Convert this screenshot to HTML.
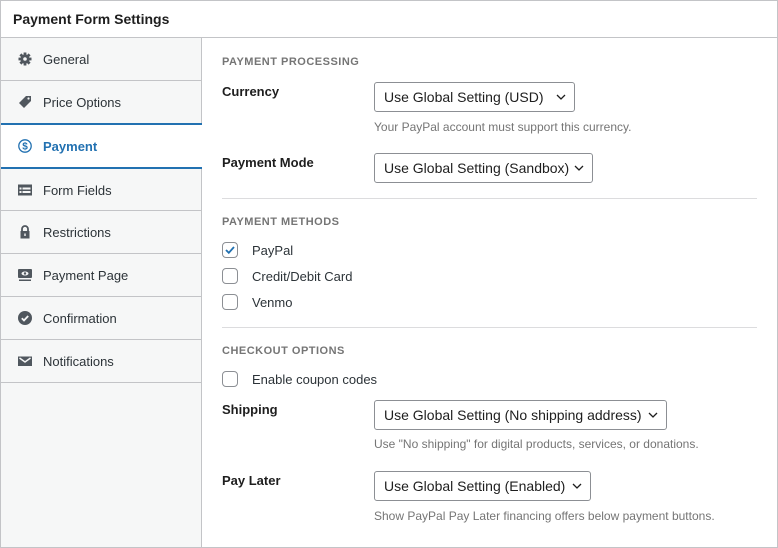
<!DOCTYPE html>
<html><head><style>
*{margin:0;padding:0;box-sizing:border-box}
body{width:778px;height:548px;background:#fff;font-family:"Liberation Sans","DejaVu Sans",sans-serif;color:#1e1e1e;position:relative;overflow:hidden}
.a{position:absolute;white-space:nowrap}
#box{position:absolute;left:0;top:0;width:778px;height:548px;border:1px solid #c3c4c7}
#hdr{left:13px;top:11px;font-size:14px;font-weight:bold}
#hline{left:1px;top:37px;width:776px;height:1px;background:#c3c4c7}
#side{left:1px;top:38px;width:201px;height:509px;background:#f6f7f7;border-right:1px solid #c3c4c7}
.nav{position:absolute;left:1px;width:200px;height:43px;border-bottom:1px solid #c3c4c7;font-size:13px;color:#2c3338}
.nav span{position:absolute;left:42px;top:14px}
.nav svg{position:absolute;left:17px;top:14px}
.act{background:#fff;border-top:2px solid #2271b1;border-bottom:2px solid #2271b1;width:201px;color:#2271b1;font-weight:bold}
.sec{font-size:11px;font-weight:bold;color:#757575;letter-spacing:.5px;left:222px}
.lbl{font-size:13px;font-weight:bold;color:#1e1e1e;left:222px}
.sel{position:absolute;left:374px;height:30px;border:1px solid #8c8f94;border-radius:3px;font-size:14px;padding:6px 0 0 9px;color:#1e1e1e}
.sel svg{position:absolute;right:8px;top:11px}
.help{left:374px;font-size:12px;color:#757575}
.hr{position:absolute;left:222px;width:535px;height:1px;background:#dcdcde}
.cb{position:absolute;left:222px;width:16px;height:16px;border:1px solid #8c8f94;border-radius:4px;background:#fff}
.cl{left:252px;font-size:13px;color:#2c3338}
</style></head><body>
<div id="box"></div>
<div class="a" id="hdr">Payment Form Settings</div>
<div class="a" id="hline"></div>
<div class="a" id="side"></div>

<div class="nav" style="top:38px"><svg width="14" height="14" viewBox="0 0 14 14"><g fill="#50575e"><circle cx="7" cy="7" r="4.6"/><rect x="5.6" y="0.5" width="2.8" height="13"/><rect x="0.5" y="5.6" width="13" height="2.8"/><rect x="5.6" y="0.5" width="2.8" height="13" transform="rotate(45 7 7)"/><rect x="5.6" y="0.5" width="2.8" height="13" transform="rotate(-45 7 7)"/></g><circle cx="7" cy="7" r="1.8" fill="#f6f7f7"/></svg><span>General</span></div>
<div class="nav" style="top:81px"><svg width="14" height="14" viewBox="0 0 14 14"><path d="M8 1h5v5L6 13 1 8z" fill="#50575e"/><circle cx="10.5" cy="3.5" r="1.1" fill="#f6f7f7"/></svg><span>Price Options</span></div>
<div class="nav act" style="top:123px;height:46px"><svg width="14" height="14" viewBox="0 0 14 14" style="top:14px"><circle cx="7" cy="7" r="6.2" fill="none" stroke="#2271b1" stroke-width="1.3"/><text x="7" y="10.5" font-size="10" text-anchor="middle" fill="#2271b1" font-family="Liberation Sans">$</text></svg><span style="top:14px">Payment</span></div>
<div class="nav" style="top:169px;height:42px"><svg width="14" height="14" viewBox="0 0 14 14"><rect x="0" y="1.5" width="14" height="11" fill="#50575e"/><rect x="1.5" y="4.5" width="2" height="2" fill="#f6f7f7"/><rect x="4.5" y="4.5" width="8" height="2" fill="#f6f7f7"/><rect x="1.5" y="8" width="2" height="2" fill="#f6f7f7"/><rect x="4.5" y="8" width="8" height="2" fill="#f6f7f7"/></svg><span>Form Fields</span></div>
<div class="nav" style="top:211px"><svg width="14" height="14" viewBox="0 0 14 14"><path d="M4 6V4a3 3 0 0 1 6 0v2" fill="none" stroke="#50575e" stroke-width="1.8"/><rect x="2.5" y="6" width="9" height="7.5" fill="#50575e"/><rect x="6.3" y="8.5" width="1.4" height="2.5" fill="#f6f7f7"/></svg><span>Restrictions</span></div>
<div class="nav" style="top:254px"><svg width="14" height="14" viewBox="0 0 14 14"><rect x="0" y="1" width="14" height="9" rx="1" fill="#50575e"/><ellipse cx="7" cy="5.5" rx="3.5" ry="2" fill="#f6f7f7"/><circle cx="7" cy="5.5" r="1.2" fill="#50575e"/><rect x="1" y="11.5" width="12" height="1.5" fill="#50575e"/></svg><span>Payment Page</span></div>
<div class="nav" style="top:297px"><svg width="14" height="14" viewBox="0 0 14 14"><circle cx="7" cy="7" r="7" fill="#50575e"/><path d="M3.8 7.2l2.2 2.2 4.2-4.4" fill="none" stroke="#f6f7f7" stroke-width="1.8"/></svg><span>Confirmation</span></div>
<div class="nav" style="top:340px"><svg width="14" height="14" viewBox="0 0 14 14"><rect x="0" y="2.5" width="14" height="9.5" fill="#50575e"/><path d="M1.5 4l5.5 4 5.5-4" fill="none" stroke="#f6f7f7" stroke-width="1.5"/></svg><span>Notifications</span></div>

<div class="a sec" style="top:56px">PAYMENT PROCESSING</div>
<div class="a lbl" style="top:84px">Currency</div>
<div class="sel" style="top:82px;width:201px">Use Global Setting (USD)<svg width="10" height="6" viewBox="0 0 10 6"><path d="M1 1l4 4 4-4" fill="none" stroke="#1e1e1e" stroke-width="1.3"/></svg></div>
<div class="a help" style="top:120px">Your PayPal account must support this currency.</div>
<div class="a lbl" style="top:155px">Payment Mode</div>
<div class="sel" style="top:153px;width:219px">Use Global Setting (Sandbox)<svg width="10" height="6" viewBox="0 0 10 6"><path d="M1 1l4 4 4-4" fill="none" stroke="#1e1e1e" stroke-width="1.3"/></svg></div>
<div class="hr" style="top:198px"></div>

<div class="a sec" style="top:216px">PAYMENT METHODS</div>
<div class="cb" style="top:242px"><svg width="14" height="14" viewBox="0 0 14 14" style="position:absolute;left:0;top:0"><path d="M3 7l2.8 2.8L11 4" fill="none" stroke="#2271b1" stroke-width="1.8"/></svg></div>
<div class="a cl" style="top:243px">PayPal</div>
<div class="cb" style="top:268px"></div>
<div class="a cl" style="top:269px">Credit/Debit Card</div>
<div class="cb" style="top:294px"></div>
<div class="a cl" style="top:295px">Venmo</div>
<div class="hr" style="top:327px"></div>

<div class="a sec" style="top:345px">CHECKOUT OPTIONS</div>
<div class="cb" style="top:371px"></div>
<div class="a cl" style="top:372px">Enable coupon codes</div>
<div class="a lbl" style="top:402px">Shipping</div>
<div class="sel" style="top:400px;width:293px">Use Global Setting (No shipping address)<svg width="10" height="6" viewBox="0 0 10 6"><path d="M1 1l4 4 4-4" fill="none" stroke="#1e1e1e" stroke-width="1.3"/></svg></div>
<div class="a help" style="top:437px">Use "No shipping" for digital products, services, or donations.</div>
<div class="a lbl" style="top:473px">Pay Later</div>
<div class="sel" style="top:471px;width:217px">Use Global Setting (Enabled)<svg width="10" height="6" viewBox="0 0 10 6"><path d="M1 1l4 4 4-4" fill="none" stroke="#1e1e1e" stroke-width="1.3"/></svg></div>
<div class="a help" style="top:509px">Show PayPal Pay Later financing offers below payment buttons.</div>
</body></html>
